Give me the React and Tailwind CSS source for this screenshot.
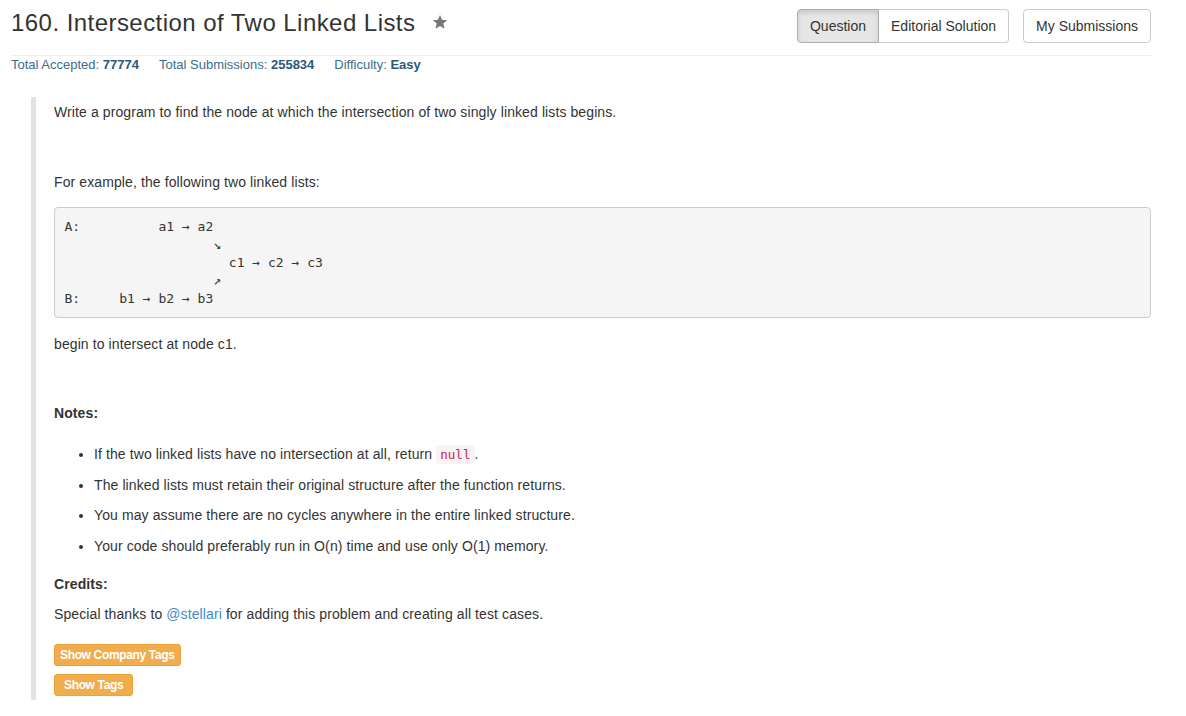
const notes = [
  "The linked lists must retain their original structure after the function returns.",
  "You may assume there are no cycles anywhere in the entire linked structure.",
  "Your code should preferably run in O(n) time and use only O(1) memory.",
];

const diagram = [
  "A:          a1 → a2",
  "                   ↘",
  "                     c1 → c2 → c3",
  "                   ↗",
  "B:     b1 → b2 → b3",
];

const Star = () => (
  <svg className="w-[16px] h-[16px] ml-[17px] mt-[5px]" viewBox="0 0 24 24" fill="#777">
    <path d="M12 1.5l3.1 7.1 7.6.7-5.8 5.1 1.8 7.6L12 18l-6.7 4 1.8-7.6-5.8-5.1 7.6-.7z" />
  </svg>
);

const App = () => {
  return (
    <div className="w-[1186px] min-h-[716px] bg-white text-[#333] font-['Liberation_Sans',Arial,sans-serif]">
      <div className="pl-[11px] pr-[35px]">
        {/* header */}
        <div className="h-[56px] border-b border-[#eee] flex justify-between items-start pt-[9px]">
          <div className="flex items-start">
            <h3 className="text-[24px] leading-[27px] tracking-[0.45px] text-[#333]">160. Intersection of Two Linked Lists</h3>
            <Star />
          </div>
          <div className="flex gap-[14px] text-[14px] leading-[20px]">
            <div className="flex">
              <button className="px-[12px] py-[6px] border border-[#adadad] rounded-l-[4px] bg-[#e6e6e6] shadow-[inset_0_3px_5px_rgba(0,0,0,0.125)]">
                Question
              </button>
              <button className="px-[12px] py-[6px] border border-l-0 border-[#ccc] rounded-r-[4px] bg-white">
                Editorial Solution
              </button>
            </div>
            <button className="px-[12px] py-[6px] border border-[#ccc] rounded-[4px] bg-white">
              My Submissions
            </button>
          </div>
        </div>

        {/* stats */}
        <div className="flex gap-[20px] text-[13px] leading-[18px] text-[#3c6b8c]">
          <span>Total Accepted: <b className="text-[#2d5878]">77774</b></span>
          <span>Total Submissions: <b className="text-[#2d5878]">255834</b></span>
          <span>Difficulty: <b className="text-[#2d5878]">Easy</b></span>
        </div>

        {/* question body */}
        <div className="mt-[23px] ml-[20px] border-l-[5px] border-[#e2e2e2] pl-[18px] pt-[5px] pb-[4px] text-[14px] leading-[20px] tracking-[0.1px]">
          <p>Write a program to find the node at which the intersection of two singly linked lists begins.</p>
          <p className="mt-[50px]">For example, the following two linked lists:</p>
          <pre className="mt-[15px] p-[9.5px] bg-[#f5f5f5] border border-[#ccc] rounded-[4px] text-[13px] leading-[18px] tracking-normal font-['DejaVu_Sans_Mono',monospace] text-[#333]">
            {diagram.join("\n")}
          </pre>
          <p className="mt-[16px]">begin to intersect at node c1.</p>
          <p className="mt-[49px] font-bold">Notes:</p>
          <ul className="mt-[21px] list-disc pl-[40px] flex flex-col gap-[10.6px]">
            <li>
              If the two linked lists have no intersection at all, return{" "}
              <code className="px-[4px] py-[2px] rounded-[4px] bg-[#f9f2f4] text-[#c7254e] text-[12.6px] leading-none tracking-normal font-['DejaVu_Sans_Mono',monospace]">
                null
              </code>
              .
            </li>
            {notes.map((n) => (
              <li key={n}>{n}</li>
            ))}
          </ul>
          <p className="mt-[18px] font-bold">Credits:</p>
          <p className="mt-[10px]">
            Special thanks to <span className="text-[#428bca]">@stellari</span> for adding this problem and creating all test cases.
          </p>
          <div className="mt-[20px] flex flex-col items-start gap-[8px]">
            <button className="px-[5px] py-[1px] text-[12px] leading-[18px] tracking-[-0.35px] font-bold text-white bg-[#f0ad4e] border border-[#eea236] rounded-[3px]">
              Show Company Tags
            </button>
            <button className="px-[9px] py-[1px] text-[12px] leading-[18px] tracking-[-0.35px] font-bold text-white bg-[#f0ad4e] border border-[#eea236] rounded-[3px]">
              Show Tags
            </button>
          </div>
        </div>
      </div>
    </div>
  );
};

export default App;
